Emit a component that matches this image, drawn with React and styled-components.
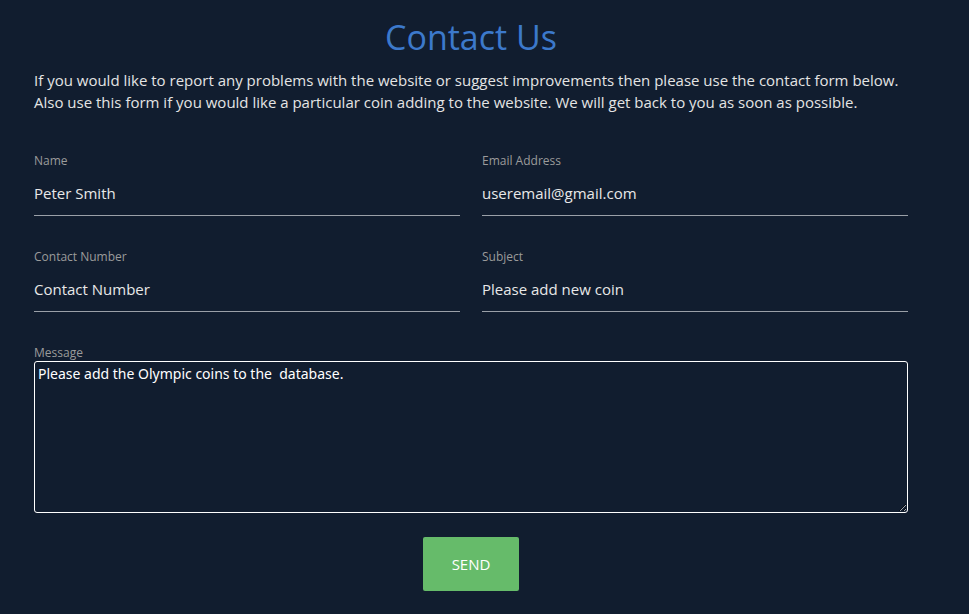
import { createGlobalStyle, styled } from "styled-components";

const GlobalStyle = createGlobalStyle`
  html, body {
    margin: 0;
    padding: 0;
    background: #111d2f;
  }
  body {
    font-family: "Open Sans", "Noto Sans", sans-serif;
    color: #e8e8e8;
  }
`;

const App = () => {
  return (
    <Page>
      <GlobalStyle />
      <Container>
        <Title>Contact Us</Title>
        <Intro>
          If you would like to report any problems with the website or suggest
          improvements then please use the contact form below.
          <br />
          Also use this form if you would like a particular coin adding to the
          website. We will get back to you as soon as possible.
        </Intro>
        <Form onSubmit={(e) => e.preventDefault()}>
          <Row>
            <Field>
              <Label>Name</Label>
              <Input defaultValue="Peter Smith" />
            </Field>
            <Field>
              <Label>Email Address</Label>
              <Input defaultValue="useremail@gmail.com" />
            </Field>
          </Row>
          <Row>
            <Field>
              <Label>Contact Number</Label>
              <Input placeholder="Contact Number" />
            </Field>
            <Field>
              <Label>Subject</Label>
              <Input defaultValue="Please add new coin" />
            </Field>
          </Row>
          <Field>
            <Label>Message</Label>
            <TextArea defaultValue="Please add the Olympic coins to the  database." />
          </Field>
          <Actions>
            <SendButton type="submit">SEND</SendButton>
          </Actions>
        </Form>
      </Container>
    </Page>
  );
};

const Page = styled.div`
  min-height: 614px;
  padding: 14px 0 0 34px;
  box-sizing: border-box;
`;

const Container = styled.div`
  width: 874px;
`;

const Title = styled.h1`
  margin: 0;
  font-size: 34px;
  line-height: 46px;
  font-weight: 400;
  color: #3c79cb;
  text-align: center;
`;

const Intro = styled.p`
  margin: 9px 0 0;
  font-size: 15px;
  line-height: 22px;
  color: #e4e4e4;
  white-space: nowrap;
`;

const Form = styled.form`
  display: flex;
  flex-direction: column;
  margin-top: 40px;
`;

const Row = styled.div`
  display: grid;
  grid-template-columns: 1fr 1fr;
  column-gap: 22px;
  margin-bottom: 33px;
`;

const Field = styled.div`
  display: flex;
  flex-direction: column;
`;

const Label = styled.label`
  font-size: 12px;
  line-height: 16px;
  color: #9b9b9b;
`;

const Input = styled.input`
  height: 47px;
  box-sizing: border-box;
  padding: 2px 0 0;
  border: none;
  border-bottom: 1px solid #9aa0a8;
  background: transparent;
  font-family: "Open Sans", "Noto Sans", sans-serif;
  font-size: 15px;
  color: #e8e8e8;
  outline: none;

  &::placeholder {
    color: #e8e8e8;
    opacity: 1;
  }
`;

const TextArea = styled.textarea`
  height: 152px;
  box-sizing: border-box;
  padding: 2px 3px;
  border: 1px solid #ffffff;
  border-radius: 3px;
  background: transparent;
  font-family: "Noto Sans", "Open Sans", sans-serif;
  font-size: 14px;
  line-height: 20px;
  color: #ffffff;
  outline: none;
  resize: vertical;
`;

const Actions = styled.div`
  display: flex;
  justify-content: center;
  margin-top: 24px;
`;

const SendButton = styled.button`
  width: 96px;
  height: 54px;
  border: none;
  border-radius: 2px;
  background: #66bb6a;
  color: #ffffff;
  font-family: "Open Sans", "Noto Sans", sans-serif;
  font-size: 15px;
  cursor: pointer;
`;

export default App;
